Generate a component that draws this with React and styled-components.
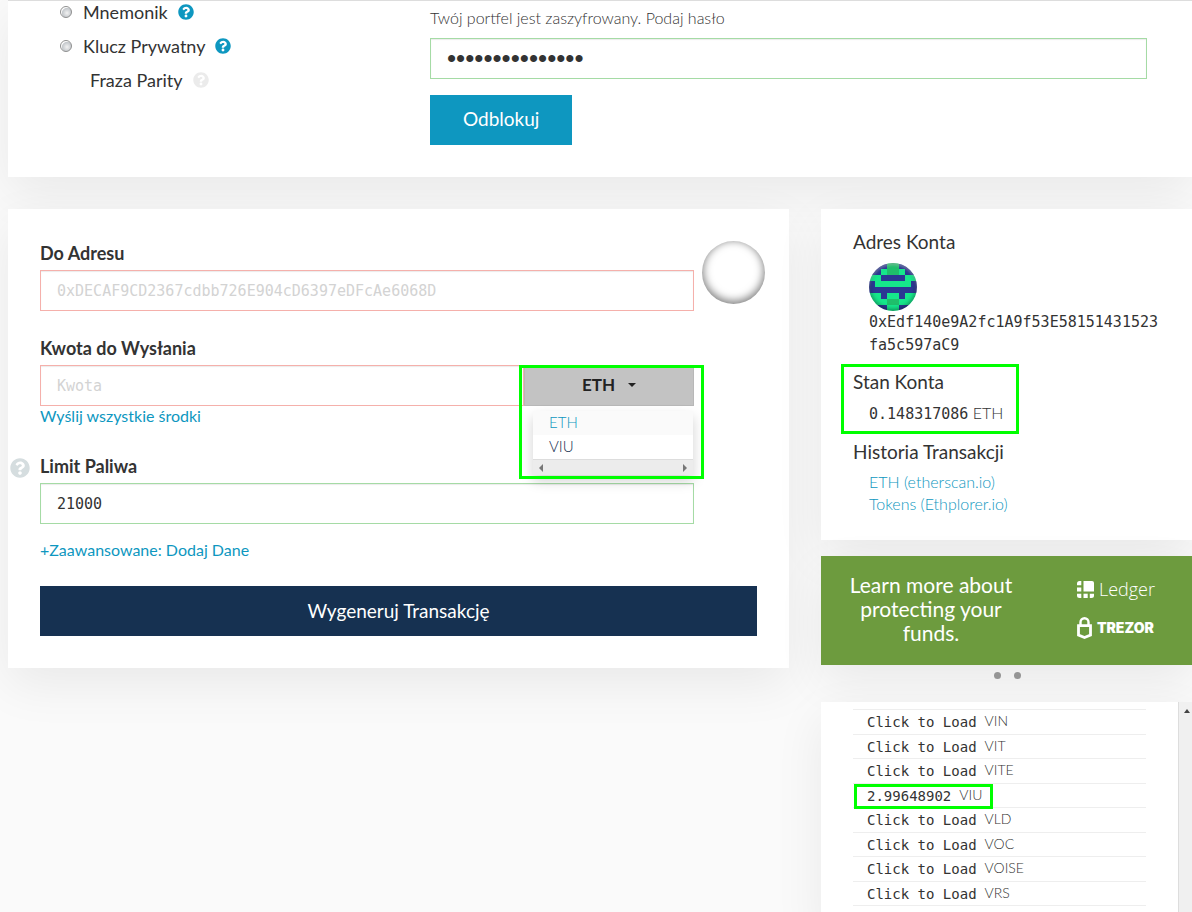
import React, { useState } from "react";
import styled, { createGlobalStyle, css } from "styled-components";
import { FaQuestionCircle } from "react-icons/fa";

// css
const GlobalStyle = createGlobalStyle`
  *, *::before, *::after {
    box-sizing: border-box;
  }
  body {
    margin: 0;
    background: #fafafa;
    color: #333;
    font-family: Lato, "Liberation Sans", sans-serif;
    font-size: 16px;
    line-height: 24px;
  }
  button, input {
    font-family: inherit;
    font-size: inherit;
  }
`;

const mono = css`
  font-family: "DejaVu Sans Mono", "Liberation Mono", monospace;
`;

const Page = styled.div`
  display: flex;
  flex-direction: column;
  gap: 32px;
  min-height: 100vh;
  padding-left: 8px;
  overflow: hidden;
`;

const Card = styled.section`
  background: #fff;
  box-shadow: 0 16px 47px 0 rgba(0, 0, 0, 0.07);
`;

const WalletCard = styled(Card)`
  display: grid;
  grid-template-columns: 390px 1fr;
  padding: 0 45px 32px 32px;
  box-shadow: inset 0 1px 0 #ddd, 0 16px 47px 0 rgba(0, 0, 0, 0.07);
`;

const WalletTypes = styled.div`
  display: flex;
  flex-direction: column;
  gap: 10px;
  padding-left: 20px;
`;

const WalletType = styled.label`
  display: flex;
  align-items: center;
  gap: 10px;
  padding-left: ${(props) => (props.$indent ? "30px" : "0")};
  font-size: 18px;
  svg {
    font-size: 16px;
    color: ${(props) => (props.$indent ? "#ebebeb" : "#0e97c0")};
  }
`;

const Radio = styled.input`
  appearance: none;
  width: 12px;
  height: 12px;
  margin: 0 1px 0 0;
  border: 1px solid #8e8f8f;
  border-radius: 50%;
  background: radial-gradient(circle at 60% 60%, #f2f2f2, #c4c8cc 55%, #fff 65%);
`;

const Unlock = styled.form`
  display: flex;
  flex-direction: column;
  align-items: flex-start;
  padding-top: 6px;
`;

const PasswordLabel = styled.label`
  margin-bottom: 8px;
  font-weight: 300;
`;

const Input = styled.input`
  ${mono}
  display: block;
  width: 100%;
  height: 41px;
  padding: 0 16px;
  border: 1px solid ${(props) => (props.$valid ? "#a5dba5" : "#f5b0ab")};
  border-radius: 0;
  background: #fff;
  box-shadow: inset 0 1px 1px rgba(0, 0, 0, 0.08);
  color: #333;
  font-size: 15px;
  outline: none;
  &::placeholder {
    color: #d3d3d3;
    opacity: 1;
  }
  &[type="password"] {
    font-family: "Liberation Sans", sans-serif;
    font-size: 26px;
  }
`;

const UnlockButton = styled.button`
  height: 50px;
  margin-top: 16px;
  padding: 0 33px 3px;
  border: 0;
  background: #0e97c0;
  color: #fff;
  font-size: 19px;
`;

const Columns = styled.div`
  display: grid;
  grid-template-columns: 40fr 19fr;
  gap: 32px;
  flex: 1;
`;

const SendCard = styled(Card)`
  align-self: start;
  padding: 32px 24px 32px 32px;
`;

const SendGrid = styled.div`
  display: grid;
  grid-template-columns: 1fr 63px;
  gap: 25px 8px;
`;

const Field = styled.div`
  grid-column: 1;
  position: relative;
`;

const FieldLabel = styled.label`
  display: block;
  margin-bottom: 5px;
  font-size: 18px;
  font-weight: 700;
`;

const IconPreview = styled.div`
  width: 63px;
  height: 63px;
  border-radius: 50%;
  box-shadow: inset 0 -2px 8px 1px rgba(0, 0, 0, 0.5);
`;

const AmountGroup = styled.div`
  display: flex;
`;

const UnitPicker = styled.div`
  position: relative;
  flex: 0 0 170px;
`;

const UnitButton = styled.button`
  display: flex;
  align-items: center;
  justify-content: center;
  gap: 13px;
  width: 100%;
  height: 41px;
  padding: 0 0 2px;
  border: 1px solid #b8b8b8;
  background: #c3c3c3;
  color: #222;
  font-size: 17px;
  font-weight: 700;
  svg {
    width: 8px;
    height: 4px;
  }
`;

const UnitMenu = styled.div`
  position: absolute;
  z-index: 1;
  top: 46px;
  left: 9px;
  right: 1px;
  background: #fff;
  box-shadow: 0 6px 12px rgba(0, 0, 0, 0.18);
`;

const UnitOption = styled.button`
  display: block;
  width: 100%;
  height: 24px;
  padding: 0 16px 3px;
  border: 0;
  background: ${(props) => (props.$active ? "#fafafa" : "#fff")};
  color: ${(props) => (props.$active ? "#0e97c0" : "#163151")};
  font-size: 15px;
  font-weight: 300;
  text-align: left;
`;

const MenuScrollbar = styled.div`
  display: flex;
  align-items: center;
  justify-content: space-between;
  height: 16px;
  padding: 0 6px;
  border-top: 1px solid #ddd;
  background: #ececec;
  svg {
    width: 4px;
    height: 8px;
  }
`;

// green marker frame drawn over a part of the page
const Marker = styled.span`
  position: absolute;
  z-index: 2;
  inset: ${(props) => props.$inset};
  border: 3px solid #00ff00;
  pointer-events: none;
`;

const TextLink = styled.a`
  color: #0e97c0;
  text-decoration: none;
  font-weight: ${(props) => (props.$light ? 300 : 400)};
`;

const SendAll = styled.p`
  margin: 0 0 3px;
  line-height: 20px;
`;

const GasHelp = styled.a`
  position: absolute;
  top: 4px;
  left: -30px;
  display: flex;
  color: #d5dddf;
  font-size: 20px;
`;

const Advanced = styled.p`
  margin: 14px 0 24px;
`;

const SubmitButton = styled.button`
  width: calc(100% - 8px);
  height: 50px;
  padding: 0 0 2px;
  border: 0;
  background: #163151;
  color: #fff;
  font-size: 19px;
`;

const Sidebar = styled.aside`
  display: flex;
  flex-direction: column;
`;

const AccountCard = styled(Card)`
  padding: 20px 16px 25px 32px;
`;

const AccountTitle = styled.h2`
  margin: 0;
  font-size: 19px;
  font-weight: 400;
  line-height: 26px;
`;

const AccountBody = styled.div`
  padding-left: 16px;
`;

const Identicon = styled.div`
  position: relative;
  width: 48px;
  height: 48px;
  margin-top: 8px;
  border-radius: 50%;
  overflow: hidden;
  svg {
    display: block;
  }
  &::after {
    content: "";
    position: absolute;
    inset: 0;
    border-radius: 50%;
    box-shadow: inset 0 -1px 5px rgba(0, 0, 0, 0.5), inset 0 2px 3px rgba(255, 255, 255, 0.4);
  }
`;

const Address = styled.p`
  ${mono}
  max-width: 292px;
  margin: 0 0 12px;
  font-size: 15px;
  line-height: 23px;
  word-break: break-all;
`;

const Balance = styled.div`
  position: relative;
  margin-bottom: 13px;
`;

const BalanceValue = styled.p`
  margin: 0;
  padding: 6px 0 0 16px;
  font-weight: 300;
`;

const Amount = styled.span`
  ${mono}
  font-size: 15px;
  font-weight: 400;
`;

const HistoryLinks = styled.div`
  display: flex;
  flex-direction: column;
  padding: 6px 0 0 16px;
  line-height: 22px;
`;

const Banner = styled.section`
  display: flex;
  align-items: center;
  justify-content: space-between;
  min-height: 109px;
  margin-top: 16px;
  padding: 0 37px 4px 25px;
  background: #6d9b3e;
  color: #fff;
  box-shadow: 0 16px 47px 0 rgba(0, 0, 0, 0.07);
`;

const BannerText = styled.p`
  width: 170px;
  margin: 0;
  font-size: 21px;
  text-align: center;
`;

const Logos = styled.div`
  display: flex;
  flex-direction: column;
  gap: 15px;
`;

const Logo = styled.a`
  display: flex;
  align-items: center;
  gap: 5px;
  color: #fff;
  text-decoration: none;
`;

const LedgerName = styled.span`
  font-family: "Open Sans", sans-serif;
  font-size: 18px;
  font-weight: 300;
`;

const TrezorName = styled.span`
  font-family: Inter, sans-serif;
  font-size: 14px;
  font-weight: 900;
`;

const Dots = styled.div`
  display: flex;
  justify-content: center;
  gap: 13px;
  padding: 7px 0 23px 2px;
`;

const Dot = styled.button`
  width: 7px;
  height: 7px;
  padding: 0;
  border: 0;
  border-radius: 50%;
  background: #959595;
`;

const TokenPanel = styled(Card)`
  display: flex;
  flex: 1;
`;

const TokenList = styled.ul`
  flex: 1;
  margin: 0;
  padding: 7px 32px 0;
  list-style: none;
`;

const Token = styled.li`
  position: relative;
  display: flex;
  gap: 8px;
  height: 25px;
  padding-left: 14px;
  border-top: 1px solid #eee;
  font-size: 14px;
  font-weight: 300;
  line-height: 22px;
  &:nth-child(even) {
    height: 24px;
  }
`;

const TokenBalance = styled.button`
  ${mono}
  padding: 0;
  border: 0;
  background: none;
  color: #333;
  font-size: 14px;
`;

const Scrollbar = styled.div`
  width: 14px;
  padding: 7px 0 0 5px;
  border-left: 1px solid #ddd;
  background: #f0f0f0;
  svg {
    display: block;
  }
`;

const PIXELS = [
  "NNNDDNNN",
  "NNGDDGNN",
  "GGNNNNGG",
  "NGGGGGGN",
  "NNNNNNNN",
  "GGNGGNGG",
  "GGGDDGGG",
  "NNNGGNNN",
];
const PIXEL_COLORS = { N: "#2b3893", G: "#16e78b", D: "#1fbf6b" };

const TOKENS = ["VIN", "VIT", "VITE", "VIU", "VLD", "VOC", "VOISE", "VRS"];

function AddressIcon() {
  return (
    <Identicon>
      <svg width="48" height="48" viewBox="0 0 8 8" shapeRendering="crispEdges">
        {PIXELS.map((row, y) =>
          row.split("").map((cell, x) => (
            <rect key={`${x}-${y}`} x={x} y={y} width="1" height="1" fill={PIXEL_COLORS[cell]} />
          ))
        )}
      </svg>
    </Identicon>
  );
}

function Wallet() {
  return (
    <WalletCard>
      <WalletTypes>
        <WalletType>
          <Radio type="radio" name="wallet" />
          Mnemonik <FaQuestionCircle />
        </WalletType>
        <WalletType>
          <Radio type="radio" name="wallet" />
          Klucz Prywatny <FaQuestionCircle />
        </WalletType>
        <WalletType as="div" $indent>
          Fraza Parity <FaQuestionCircle />
        </WalletType>
      </WalletTypes>
      <Unlock onSubmit={(e) => e.preventDefault()}>
        <PasswordLabel htmlFor="password">
          Twój portfel jest zaszyfrowany. Podaj hasło
        </PasswordLabel>
        <Input id="password" type="password" defaultValue="abcdefghijklmno" $valid />
        <UnlockButton>Odblokuj</UnlockButton>
      </Unlock>
    </WalletCard>
  );
}

function Send() {
  const [unit, setUnit] = useState("ETH");
  return (
    <SendCard>
      <SendGrid>
        <Field>
          <FieldLabel htmlFor="to">Do Adresu</FieldLabel>
          <Input id="to" placeholder="0xDECAF9CD2367cdbb726E904cD6397eDFcAe6068D" />
        </Field>
        <IconPreview />
        <Field>
          <FieldLabel htmlFor="amount">Kwota do Wysłania</FieldLabel>
          <AmountGroup>
            <Input id="amount" placeholder="Kwota" />
            <UnitPicker>
              <UnitButton type="button">
                {unit}
                <svg viewBox="0 0 8 4">
                  <path d="M0 0h8L4 4z" fill="#222" />
                </svg>
              </UnitButton>
              <UnitMenu>
                {["ETH", "VIU"].map((name) => (
                  <UnitOption key={name} $active={name === unit} onClick={() => setUnit(name)}>
                    {name}
                  </UnitOption>
                ))}
                <MenuScrollbar>
                  <svg viewBox="0 0 4 8">
                    <path d="M4 0v8L0 4z" fill="#777" />
                  </svg>
                  <svg viewBox="0 0 4 8">
                    <path d="M0 0v8l4-4z" fill="#777" />
                  </svg>
                </MenuScrollbar>
              </UnitMenu>
              <Marker $inset="0 -10px -73px -5px" />
            </UnitPicker>
          </AmountGroup>
          <SendAll>
            <TextLink href="#all">Wyślij wszystkie środki</TextLink>
          </SendAll>
        </Field>
        <Field>
          <GasHelp href="#gas" aria-label="Limit Paliwa">
            <FaQuestionCircle />
          </GasHelp>
          <FieldLabel htmlFor="gas">Limit Paliwa</FieldLabel>
          <Input id="gas" defaultValue="21000" $valid />
        </Field>
      </SendGrid>
      <Advanced>
        <TextLink href="#advanced">+Zaawansowane: Dodaj Dane</TextLink>
      </Advanced>
      <SubmitButton>Wygeneruj Transakcję</SubmitButton>
    </SendCard>
  );
}

function Account() {
  return (
    <AccountCard>
      <AccountTitle>Adres Konta</AccountTitle>
      <AccountBody>
        <AddressIcon />
        <Address>0xEdf140e9A2fc1A9f53E58151431523fa5c597aC9</Address>
      </AccountBody>
      <Balance>
        <AccountTitle>Stan Konta</AccountTitle>
        <BalanceValue>
          <Amount>0.148317086</Amount> ETH
        </BalanceValue>
        <Marker $inset="-5px 157px -8px -12px" />
      </Balance>
      <AccountTitle>Historia Transakcji</AccountTitle>
      <HistoryLinks>
        <TextLink href="#etherscan" $light>ETH (etherscan.io)</TextLink>
        <TextLink href="#ethplorer" $light>Tokens (Ethplorer.io)</TextLink>
      </HistoryLinks>
    </AccountCard>
  );
}

function HardwareBanner() {
  return (
    <>
      <Banner>
        <BannerText>Learn more about protecting your funds.</BannerText>
        <Logos>
          <Logo href="#ledger">
            <svg width="17" height="17" viewBox="0 0 17 17" fill="#fff">
              <path d="M6.500 0H15q2 0 2 2v8.500H6.500z" />
              <path d="M4.300 0v4.300H0V2.500Q0 0 2.500 0z" />
              <path d="M0 6.500h4.300v4H0z" />
              <path d="M0 12.700h4.300V17H2.500Q0 17 0 14.500z" />
              <path d="M6.500 12.700h4.200V17H6.500z" />
              <path d="M12.800 12.700H17v1.800Q17 17 14.500 17h-1.700z" />
            </svg>
            <LedgerName>Ledger</LedgerName>
          </Logo>
          <Logo href="#trezor">
            <svg width="15" height="22" viewBox="0 0 15 22" fill="none" stroke="#fff">
              <path d="M3.500 8.500V5.200a4 4 0 0 1 8 0v3.300" strokeWidth="2.400" />
              <path d="M1.500 8.700h12v9.400l-6 2.400-6-2.400z" strokeWidth="2.800" />
            </svg>
            <TrezorName>TREZOR</TrezorName>
          </Logo>
        </Logos>
      </Banner>
      <Dots>
        <Dot aria-label="1" />
        <Dot aria-label="2" />
      </Dots>
    </>
  );
}

function Tokens() {
  return (
    <TokenPanel>
      <TokenList>
        {TOKENS.map((name) => (
          <Token key={name}>
            <TokenBalance>{name === "VIU" ? "2.99648902" : "Click to Load"}</TokenBalance>
            {name}
            {name === "VIU" && <Marker $inset="0 153px -2px 1px" />}
          </Token>
        ))}
        <Token />
      </TokenList>
      <Scrollbar>
        <svg width="6" height="4" viewBox="0 0 6 4">
          <path d="M0 4h6L3 0z" fill="#444" />
        </svg>
      </Scrollbar>
    </TokenPanel>
  );
}

function App() {
  return (
    <>
      <GlobalStyle />
      <Page>
        <Wallet />
        <Columns>
          <Send />
          <Sidebar>
            <Account />
            <HardwareBanner />
            <Tokens />
          </Sidebar>
        </Columns>
      </Page>
    </>
  );
}

export default App;
